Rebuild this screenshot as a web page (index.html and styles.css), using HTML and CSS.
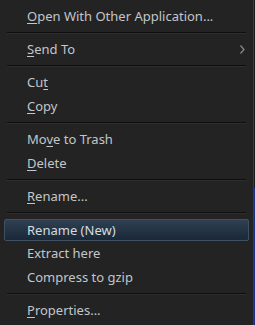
FILE: index.html
```html
<!DOCTYPE html>
<html lang="en">
<head>
    <meta charset="UTF-8">
    <meta name="viewport" content="width=device-width, initial-scale=1.0">
    <title>Context Menu</title>
    <link rel="stylesheet" href="styles.css">
</head>
<body>
    <div class="menu">
        <div class="item"><span><u>O</u>pen With Other Application...</span></div>
        <div class="separator"></div>
        <div class="item">
            <span><u>S</u>end To</span>
            <svg class="arrow" width="5" height="9" viewBox="0 0 5 9"><path d="M0.5 0.5 L4 4.5 L0.5 8.5" fill="none" stroke="#8c8c8c" stroke-width="1.2"/></svg>
        </div>
        <div class="separator"></div>
        <div class="item"><span>Cu<u>t</u></span></div>
        <div class="item"><span><u>C</u>opy</span></div>
        <div class="separator"></div>
        <div class="item"><span>Mo<u>v</u>e to Trash</span></div>
        <div class="item"><span><u>D</u>elete</span></div>
        <div class="separator"></div>
        <div class="item"><span><u>R</u>ename...</span></div>
        <div class="separator"></div>
        <div class="item active"><span>Rename (New)</span></div>
        <div class="item"><span>Extract here</span></div>
        <div class="item"><span>Compress to gzip</span></div>
        <div class="separator"></div>
        <div class="item"><span><u>P</u>roperties...</span></div>
    </div>
</body>
</html>
```

FILE: styles.css
```css
body {
    margin: 0;
    height: 325px;
    overflow: hidden;
    font-family: 'Noto Sans', sans-serif;
    font-size: 13px;
    background: linear-gradient(to bottom, #1c1c1c 188px, #1b2f86 188px);
}
.menu {
    width: 254px;
    height: 325px;
    box-sizing: border-box;
    padding-top: 4px;
    background-color: #232323;
    border-right: 1px solid #3b3b3b;
}
.item {
    height: 24px;
    margin: 0 4px;
    padding: 0 3px 0 22px;
    display: flex;
    align-items: center;
    justify-content: space-between;
    color: #c2c6ca;
    box-sizing: border-box;
    border: 1px solid transparent;
    border-radius: 2px;
}
.item u {
    text-decoration-thickness: 1px;
    text-underline-offset: 2px;
}
.active {
    margin-top: 2px;
    height: 22px;
    background: linear-gradient(to bottom, #2e4052, #1a2838);
    border-color: #3f5060;
    color: #d6dbe0;
}
.arrow {
    display: block;
}
.separator {
    height: 9px;
    margin: 0 7px;
    display: flex;
    flex-direction: column;
    justify-content: center;
}
.separator::before {
    content: '';
    height: 1px;
    background-color: #0e0e0e;
}
.separator::after {
    content: '';
    height: 1px;
    background-color: #2e2e2e;
}
```
